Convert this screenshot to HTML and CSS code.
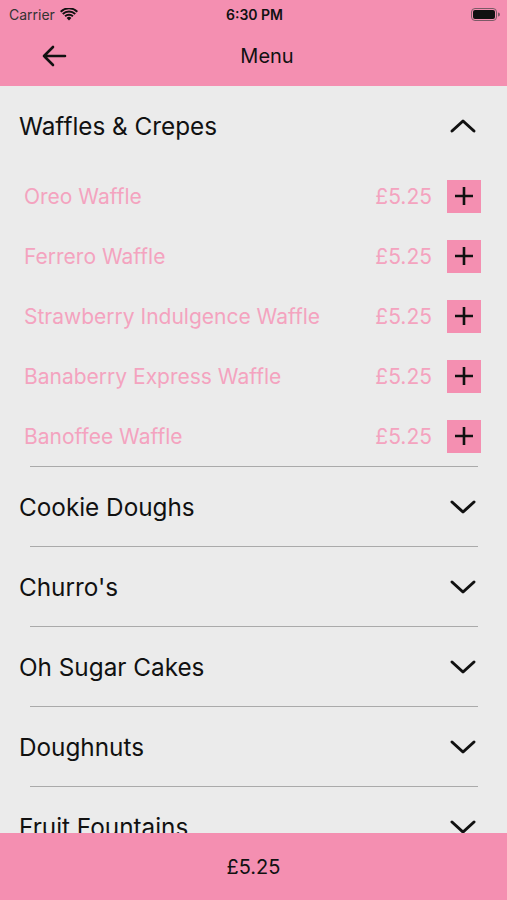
FILE: index.html
```html
<!DOCTYPE html>
<html lang="en">
<head>
    <meta charset="UTF-8">
    <meta name="viewport" content="width=device-width, initial-scale=1.0">
    <title>Menu</title>
    <link rel="stylesheet" href="styles.css">
</head>
<body>
    <div class="app">
        <header class="top">
            <div class="status">
                <div class="carrier">Carrier
                    <svg class="wifi" width="18" height="13" viewBox="0 0 18 13">
                        <path d="M9 12.5 L6.6 9.9 A3.4 3.4 0 0 1 11.4 9.9 Z" fill="#111"/>
                        <path d="M4.4 7.6 A6.6 6.6 0 0 1 13.6 7.6 L12.3 9 A4.7 4.7 0 0 0 5.7 9 Z" fill="#111"/>
                        <path d="M2.1 5.3 A9.9 9.9 0 0 1 15.9 5.3 L14.6 6.7 A8 8 0 0 0 3.4 6.7 Z" fill="#111"/>
                        <path d="M0 3 A13 13 0 0 1 18 3 L16.7 4.4 A11.1 11.1 0 0 0 1.3 4.4 Z" fill="#111"/>
                    </svg>
                </div>
                <div class="time">6:30 PM</div>
                <div class="battery">
                    <svg width="29" height="13" viewBox="0 0 29 13">
                        <rect x="0.5" y="0.5" width="25" height="12" rx="3.5" fill="none" stroke="#7a5a66"/>
                        <rect x="2" y="2" width="22" height="9" rx="2" fill="#111"/>
                        <path d="M27 4.5 A2 2 0 0 1 27 8.5 Z" fill="#7a5a66"/>
                    </svg>
                </div>
            </div>
            <div class="nav">
                <svg class="back" width="26" height="22" viewBox="0 0 26 22">
                    <path d="M24 11 H3 M12 2 L3 11 L12 20" fill="none" stroke="#111" stroke-width="2.6" stroke-linecap="round" stroke-linejoin="round"/>
                </svg>
                <div class="title">Menu</div>
            </div>
        </header>

        <main class="menu">
            <section class="category open">
                <div class="cat-head">
                    <span>Waffles &amp; Crepes</span>
                    <svg class="chev" width="28" height="16" viewBox="0 0 28 16"><path d="M3 13 L14 3 L25 13" fill="none" stroke="#111" stroke-width="3" stroke-linecap="round" stroke-linejoin="round"/></svg>
                </div>
                <ul class="items">
                    <li><span class="name">Oreo Waffle</span><span class="price">£5.25</span><button class="add"><svg width="20" height="20" viewBox="0 0 20 20"><path d="M10 1 V19 M1 10 H19" stroke="#111" stroke-width="2.6"/></svg></button></li>
                    <li><span class="name">Ferrero Waffle</span><span class="price">£5.25</span><button class="add"><svg width="20" height="20" viewBox="0 0 20 20"><path d="M10 1 V19 M1 10 H19" stroke="#111" stroke-width="2.6"/></svg></button></li>
                    <li><span class="name">Strawberry Indulgence Waffle</span><span class="price">£5.25</span><button class="add"><svg width="20" height="20" viewBox="0 0 20 20"><path d="M10 1 V19 M1 10 H19" stroke="#111" stroke-width="2.6"/></svg></button></li>
                    <li><span class="name">Banaberry Express Waffle</span><span class="price">£5.25</span><button class="add"><svg width="20" height="20" viewBox="0 0 20 20"><path d="M10 1 V19 M1 10 H19" stroke="#111" stroke-width="2.6"/></svg></button></li>
                    <li><span class="name">Banoffee Waffle</span><span class="price">£5.25</span><button class="add"><svg width="20" height="20" viewBox="0 0 20 20"><path d="M10 1 V19 M1 10 H19" stroke="#111" stroke-width="2.6"/></svg></button></li>
                </ul>
            </section>
            <section class="category">
                <div class="cat-head"><span>Cookie Doughs</span>
                    <svg class="chev" width="28" height="16" viewBox="0 0 28 16"><path d="M3 3 L14 13 L25 3" fill="none" stroke="#111" stroke-width="3" stroke-linecap="round" stroke-linejoin="round"/></svg></div>
            </section>
            <section class="category">
                <div class="cat-head"><span>Churro's</span>
                    <svg class="chev" width="28" height="16" viewBox="0 0 28 16"><path d="M3 3 L14 13 L25 3" fill="none" stroke="#111" stroke-width="3" stroke-linecap="round" stroke-linejoin="round"/></svg></div>
            </section>
            <section class="category">
                <div class="cat-head"><span>Oh Sugar Cakes</span>
                    <svg class="chev" width="28" height="16" viewBox="0 0 28 16"><path d="M3 3 L14 13 L25 3" fill="none" stroke="#111" stroke-width="3" stroke-linecap="round" stroke-linejoin="round"/></svg></div>
            </section>
            <section class="category">
                <div class="cat-head"><span>Doughnuts</span>
                    <svg class="chev" width="28" height="16" viewBox="0 0 28 16"><path d="M3 3 L14 13 L25 3" fill="none" stroke="#111" stroke-width="3" stroke-linecap="round" stroke-linejoin="round"/></svg></div>
            </section>
            <section class="category">
                <div class="cat-head"><span>Fruit Fountains</span>
                    <svg class="chev" width="28" height="16" viewBox="0 0 28 16"><path d="M3 3 L14 13 L25 3" fill="none" stroke="#111" stroke-width="3" stroke-linecap="round" stroke-linejoin="round"/></svg></div>
            </section>
        </main>

        <footer class="total">£5.25</footer>
    </div>
</body>
</html>
```

FILE: styles.css
```css
body {
    margin: 0;
    font-family: Inter, "Noto Sans", sans-serif;
    color: #111;
}

.app {
    display: flex;
    flex-direction: column;
    height: 900px;
    background-color: #ebebeb;
}

.top {
    background-color: #f48fb1;
    height: 86px;
}

.status {
    display: flex;
    align-items: center;
    justify-content: space-between;
    height: 28px;
    padding: 0 7px 0 9px;
    font-size: 14px;
}

.carrier {
    display: flex;
    align-items: center;
    gap: 5px;
    flex: 1;
    color: #333;
}

.time {
    font-weight: 600;
    flex: 1;
    text-align: center;
}

.battery {
    flex: 1;
    display: flex;
    justify-content: flex-end;
}

.nav {
    display: flex;
    align-items: center;
    height: 56px;
    padding-left: 41px;
}

.title {
    flex: 1;
    text-align: center;
    font-size: 20px;
    padding-right: 40px;
}

.menu {
    flex: 1;
    overflow: hidden;
}

.cat-head {
    display: flex;
    align-items: center;
    justify-content: space-between;
    height: 79px;
    padding: 0 30px 0 19px;
    font-size: 24.3px;
}

.category {
    border-top: 1px solid #aaa;
    margin: 0 29px 0 30px;
}

.category .cat-head {
    margin: 0 -29px 0 -30px;
}

.category.open {
    border-top: none;
}

.category.open .cat-head {
    height: 80px;
}

.items {
    margin: 0;
    padding: 0;
}

.items li {
    list-style: none;
    display: flex;
    align-items: center;
    height: 60px;
    padding: 0 26px 0 24px;
    color: #f4a3bf;
    font-size: 21px;
}

.category .items {
    margin: 0 -29px 0 -30px;
}

.name {
    flex: 1;
}

.price {
    margin-right: 15px;
}

.add {
    display: flex;
    align-items: center;
    justify-content: center;
    width: 34px;
    height: 33px;
    border: none;
    padding: 0;
    background-color: #f48fb1;
}

.total {
    height: 67px;
    background-color: #f48fb1;
    display: flex;
    align-items: center;
    justify-content: center;
    font-size: 20px;
}
```
